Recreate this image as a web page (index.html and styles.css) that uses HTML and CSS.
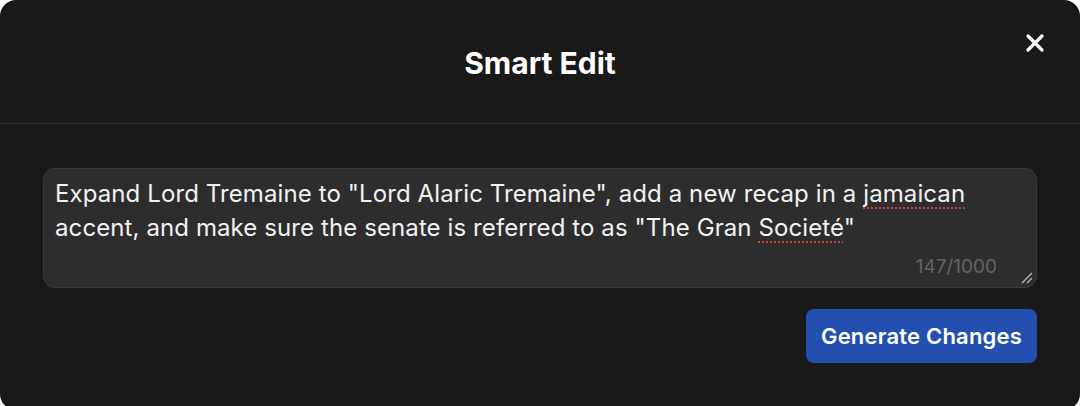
FILE: index.html
```html
<!DOCTYPE html>
<html>
<head>
<meta charset="utf-8">
<link rel="stylesheet" href="styles.css">
</head>
<body>
<div class="modal">
  <div class="header">
    <h1 class="title">Smart Edit</h1>
    <button class="close" aria-label="Close">
      <svg width="20" height="20" viewBox="0 0 20 20"><path d="M3 3 L17 17 M17 3 L3 17" stroke="#fff" stroke-width="3.2" stroke-linecap="round" fill="none"/></svg>
    </button>
  </div>
  <div class="content">
    <div class="field">
      <div class="input">Expand Lord Tremaine to "Lord Alaric Tremaine", add a new recap in a <span class="spell">jamaican</span> accent, and make sure the senate is referred to as "The Gran <span class="spell">Societé</span>"</div>
      <span class="counter">147/1000</span>
      <svg class="grip" width="14" height="14" viewBox="0 0 14 14"><path d="M13 3 L3 13 M13 8 L8 13" stroke="#bbb" stroke-width="1.3" fill="none"/></svg>
    </div>
    <div class="actions">
      <button class="primary">Generate Changes</button>
    </div>
  </div>
</div>
</body>
</html>
```
FILE: styles.css
```css
html, body {
  margin: 0;
  padding: 0;
  background: #ffffff;
  width: 1080px;
  height: 406px;
  overflow: hidden;
}
.modal {
  width: 1080px;
  height: 410px;
  background: #191919;
  border-radius: 16px;
  font-family: Inter, Roboto, "Noto Sans", sans-serif;
  color: #fff;
  box-sizing: border-box;
}
.header {
  position: relative;
  height: 124px;
  border-bottom: 1px solid #333333;
  box-sizing: border-box;
  display: flex;
  align-items: center;
  justify-content: center;
}
.title {
  margin: 0;
  font-size: 30px;
  font-weight: 700;
  margin-top: 2px;
}
.close {
  position: absolute;
  top: 33px;
  right: 35px;
  width: 20px;
  height: 20px;
  padding: 0;
  border: 0;
  background: none;
  display: flex;
}
.content {
  padding: 44px 43px 0 43px;
}
.field {
  position: relative;
  height: 120px;
  background: #2d2d2d;
  border: 1px solid #3b3b3b;
  border-radius: 12px;
  box-sizing: border-box;
}
.input {
  padding: 8px 11px;
  font-size: 24px;
  letter-spacing: 0.1px;
  line-height: 34px;
  color: #f2f2f2;
}
.spell {
  text-decoration: underline dotted #d04040;
  text-decoration-thickness: 2px;
  text-underline-offset: 5px;
}
.counter {
  position: absolute;
  right: 39px;
  bottom: 9px;
  font-size: 19px;
  color: #646464;
}
.grip {
  position: absolute;
  right: 3px;
  bottom: 3px;
}
.actions {
  display: flex;
  justify-content: flex-end;
  margin-top: 21px;
}
.primary {
  width: 231px;
  height: 54px;
  border: 0;
  border-radius: 8px;
  background: #234fb0;
  color: #fff;
  font-family: Inter, Roboto, "Noto Sans", sans-serif;
  font-size: 22px;
  letter-spacing: 0.2px;
  font-weight: 600;
}
```
